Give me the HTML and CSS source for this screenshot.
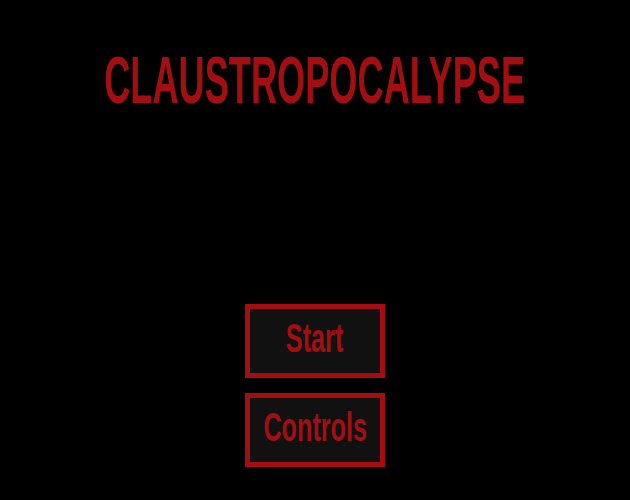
FILE: index.html
```html
<!DOCTYPE html>
<html lang="en">
<head>
    <meta charset="UTF-8">
    <meta name="viewport" content="width=device-width, initial-scale=1.0">
    <title>Claustropocalypse</title>
    <link rel="stylesheet" href="styles.css">
</head>
<body>
    <div class="screen">
        <h1 class="title"><span>CLAUSTROPOCALYPSE</span></h1>
        <div class="menu">
            <button type="button" class="menu-btn"><span>Start</span></button>
            <button type="button" class="menu-btn"><span>Controls</span></button>
        </div>
    </div>
</body>
</html>
```

FILE: styles.css
```css
html, body {
    margin: 0;
    padding: 0;
    background: #000;
    height: 100%;
}
.screen {
    display: flex;
    flex-direction: column;
    align-items: center;
    padding-top: 40px;
    font-family: "Liberation Sans", Arial, sans-serif;
    font-weight: bold;
    color: #a30e11;
}
.title {
    margin: 0;
    display: flex;
    justify-content: center;
    font-size: 67px;
    line-height: 80px;
    white-space: nowrap;
}
/* squeeze the wide sans into a condensed look */
.title span {
    flex: none;
    margin: 0 -180px;
    transform: scaleX(0.54);
}
.menu {
    margin-top: 184px;
    display: flex;
    flex-direction: column;
    gap: 15px;
}
.menu-btn {
    width: 140px;
    height: 74px;
    box-sizing: border-box;
    border: 5px solid #a30e11;
    background: #111;
    color: #a30e11;
    font-family: inherit;
    font-weight: bold;
    font-size: 40px;
    padding: 0 0 6px;
    white-space: nowrap;
    display: flex;
    align-items: center;
    justify-content: center;
}
.menu-btn span {
    flex: none;
    margin: 0 -30px;
    transform: scaleX(0.63);
}
```
